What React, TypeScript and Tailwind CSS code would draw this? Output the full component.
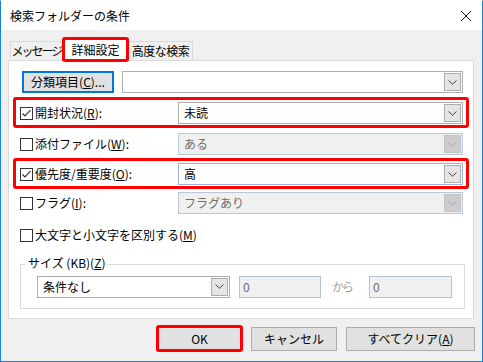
import React from 'react'

// small building blocks of the dialog
const Chevron = ({ disabled }: { disabled?: boolean }) => (
  <svg width="9" height="5" viewBox="0 0 9 5">
    <path d="M0.5 0.5 L4.5 4.2 L8.5 0.5" fill="none" stroke={disabled ? '#a8a8a8' : '#404040'} strokeWidth="1" />
  </svg>
)

interface ComboProps {
  value?: string
  width: number
  disabled?: boolean
  blue?: boolean
}

function Combo({ value, width, disabled, blue }: ComboProps) {
  const border = disabled ? 'border-[#b9c6d6]' : blue ? 'border-[#9fb3cc]' : 'border-[#adadad]'
  return (
    <div
      className={`flex h-[22px] shrink-0 items-center border p-[1px] ${border} ${disabled ? 'bg-[#f0f0f0] text-[#6d6d6d]' : 'bg-white text-black'}`}
      style={{ width }}
    >
      <span className="flex-1 whitespace-nowrap pl-[4px] leading-none">{value}</span>
      <div
        className={`flex h-[18px] w-[17px] items-center justify-center border ${disabled ? 'border-[#c4c4c4] bg-[#cccccc]' : 'border-[#acacac] bg-[#e5e5e5]'}`}
      >
        <Chevron disabled={disabled} />
      </div>
    </div>
  )
}

const Check = ({ checked }: { checked?: boolean }) => (
  <div className="flex h-[13px] w-[13px] shrink-0 items-center justify-center border border-[#333333] bg-white">
    {checked && (
      <svg width="11" height="11" viewBox="0 0 11 11">
        <path d="M1.5 5.5 L4 8 L9.5 2.2" fill="none" stroke="#333333" strokeWidth="1.2" />
      </svg>
    )}
  </div>
)

const RedBox = ({ className }: { className: string }) => (
  <div className={`pointer-events-none absolute rounded-[3px] border-[3px] border-[#ff0000] ${className}`} />
)

interface RowProps {
  label: React.ReactNode
  checked?: boolean
  value: string
  disabled?: boolean
  blue?: boolean
  highlight?: boolean
  className?: string
}

function Row({ label, checked, value, disabled, blue, highlight, className }: RowProps) {
  return (
    <div className={`relative flex h-[22px] items-center pl-[11px] pr-[10px] ${className ?? ''}`}>
      {highlight && <RedBox className="-top-[5px] -bottom-[4px] left-[4px] right-[4px]" />}
      <Check checked={checked} />
      <span className="ml-[2px] whitespace-nowrap leading-none">{label}</span>
      <div className="ml-auto">
        <Combo value={value} width={285} disabled={disabled} blue={blue} />
      </div>
    </div>
  )
}

export default function App() {
  return (
    <div className="flex h-[362px] w-[483px] flex-col border border-[#1a7fd6] border-t-white bg-[#f0f0f0] font-['Meiryo_UI','Noto_Sans_CJK_JP',sans-serif] text-[12px] text-black">
      {/* title bar */}
      <div className="flex h-[29px] shrink-0 items-center justify-between bg-white pl-[9px] pr-[10px]">
        <span className="leading-none">検索フォルダーの条件</span>
        <svg width="12" height="12" viewBox="0 0 12 12">
          <path d="M1 1 L11 11 M11 1 L1 11" stroke="#111111" strokeWidth="1" />
        </svg>
      </div>

      {/* tabs */}
      <div className="mt-[8px] flex h-[22px] items-end pl-[9px]">
        <div className="flex h-[19px] w-[53px] items-center justify-center whitespace-nowrap border border-b-0 border-[#d9d9d9] bg-[#f0f0f0] tracking-[-2px] leading-none">
          メッセージ
        </div>
        <div className="relative -mx-[1px] flex h-[22px] w-[67px] items-center justify-center whitespace-nowrap border border-b-0 border-[#d9d9d9] bg-white leading-none">
          <RedBox className="-top-[2px] -bottom-[2px] -left-[1px] -right-[1px]" />
          詳細設定
        </div>
        <div className="flex h-[19px] w-[65px] items-center justify-center whitespace-nowrap border border-b-0 border-[#d9d9d9] bg-[#f0f0f0] tracking-[-0.5px] leading-none">
          高度な検索
        </div>
      </div>

      {/* tab panel */}
      <div className="ml-[7px] flex h-[259px] w-[466px] flex-col border border-[#d9d9d9] bg-white">
        <div className="mt-[10px] flex h-[22px] items-center pl-[13px] pr-[10px]">
          <div className="flex h-[22px] w-[92px] items-center justify-center whitespace-nowrap border-2 border-[#0078d7] bg-[#e1e1e1] leading-none">
            分類項目(<u>C</u>)...
          </div>
          <div className="ml-auto">
            <Combo width={341} />
          </div>
        </div>

        <Row className="mt-[9px]" label={<>開封状況(<u>R</u>):</>} checked value="未読" highlight />
        <Row className="mt-[9px]" label={<>添付ファイル(<u>W</u>):</>} value="ある" disabled />
        <Row className="mt-[8px]" label={<>優先度/重要度(<u>O</u>):</>} checked value="高" blue highlight />
        <Row className="mt-[7px]" label={<>フラグ(<u>I</u>):</>} value="フラグあり" disabled />

        <div className="mt-[10px] flex h-[22px] items-center pl-[11px]">
          <Check />
          <span className="ml-[2px] whitespace-nowrap leading-none">
            大文字と小文字を区別する(<u>M</u>)
          </span>
        </div>

        {/* size group */}
        <div className="relative ml-[11px] mt-[18px] flex h-[45px] w-[445px] items-center border border-[#dcdcdc] pl-[16px]">
          <span className="absolute -top-[8px] left-[5px] whitespace-nowrap bg-white px-[2px] leading-none">
            サイズ (KB)(<u>Z</u>)
          </span>
          <Combo value="条件なし" width={193} />
          <div className="ml-[9px] flex h-[22px] w-[82px] items-center border border-[#b2c3d9] bg-[#f0f0f0] pl-[3px] leading-none text-[#6d6d6d]">
            0
          </div>
          <span className="ml-[11px] w-[37px] whitespace-nowrap leading-none tracking-[-2px] text-[#a0a0a0]">から</span>
          <div className="flex h-[22px] w-[83px] items-center border border-[#b2c3d9] bg-[#f0f0f0] pl-[3px] leading-none text-[#6d6d6d]">
            0
          </div>
        </div>
      </div>

      {/* buttons */}
      <div className="mt-[8px] flex justify-end gap-[9px] pr-[7px]">
        <div className="relative flex h-[24px] w-[85px] items-center justify-center border border-[#adadad] bg-[#e1e1e1] leading-none">
          <RedBox className="-top-[3px] -bottom-[2px] -left-[2px] -right-[2px]" />
          OK
        </div>
        <div className="flex h-[24px] w-[86px] items-center justify-center whitespace-nowrap border border-[#adadad] bg-[#e1e1e1] leading-none">
          キャンセル
        </div>
        <div className="flex h-[24px] w-[129px] items-center justify-center whitespace-nowrap border border-[#adadad] bg-[#e1e1e1] leading-none">
          すべてクリア(<u>A</u>)
        </div>
      </div>
    </div>
  )
}
